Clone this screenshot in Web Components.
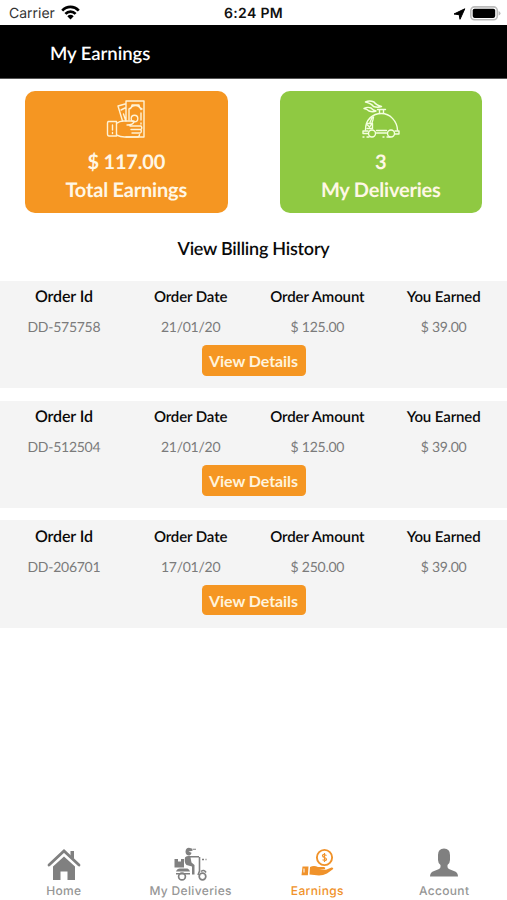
<!DOCTYPE html>
<html lang="en"><head><meta charset="utf-8"><title>My Earnings</title>
<style>
html,body{margin:0;height:100%;background:#fff}
body{font-family:Lato,"Open Sans",sans-serif;color:#0a0a0a;overflow:hidden;text-rendering:geometricPrecision}
</style></head><body>
<earnings-app></earnings-app>
<script>
const make=(name,html)=>customElements.define(name,class extends HTMLElement{
  constructor(){super();this.attachShadow({mode:'open'}).innerHTML=typeof html==='function'?html(this):html;}
});

make('status-bar',`<style>
:host{display:grid;grid-template-columns:1fr auto 1fr;align-items:center;height:25px;padding:2px 6px 0 9px;box-sizing:border-box;font:14px Inter,"Liberation Sans",sans-serif;color:#111}
.l,.r{display:flex;align-items:center}.l{color:#333}.r{justify-content:flex-end;gap:4px}b{font-weight:600;letter-spacing:.35px;margin-left:-3px}
.l svg{margin:-2px 0 0 6px}svg{display:block}
</style>
<div class="l"><span>Carrier</span><svg width="19" height="15" viewBox="0 0 19 15"><g fill="none" stroke="#000" stroke-width="2.700"><path d="M1.200 5.600C6 .7 13 .7 17.800 5.600M4.400 8.900c2.900-3 7.300-3 10.200 0"/></g><path d="M6.300 11.200q3.200-2.700 6.400 0L9.500 14.500z"/></svg></div>
<b>6:24 PM</b>
<div class="r"><svg width="13" height="12" viewBox="0 0 13 12"><path d="M11.800.8 7 11.300 6.200 6.700 1 6z" stroke="#000" stroke-width="1" stroke-linejoin="round"/></svg><svg width="31" height="15" viewBox="0 0 31 15"><rect x=".8" y=".9" width="26.500" height="12.800" rx="3.700" fill="#fff" stroke="#bbb" stroke-width="1.600"/><rect x="2.700" y="2.700" width="22.500" height="9.200" rx="1.800"/><path d="M28.600 5v4.600q1.900-.7 1.900-2.300T28.600 5" fill="#bbb"/></svg></div>`);

make('title-bar',`<style>:host{display:flex;align-items:center;box-sizing:border-box;height:54px;padding:2px 50px 0;background:#000;color:#fff;border-bottom:1px solid #555;font-size:18.500px;font-weight:600;letter-spacing:-.05px}</style><slot></slot>`);

make('stat-card',`<style>
:host{display:flex;flex-direction:column;align-items:center;width:203px;height:122px;box-sizing:border-box;padding-top:9px;border-radius:10px;background:var(--card);color:#fff7e5;font-size:20px;letter-spacing:-.2px;font-weight:700;line-height:27.500px}
.i{height:38px;width:40px;margin-bottom:11px}</style><div class="i"><slot name="icon"></slot></div><slot name="value"></slot><slot></slot>`);

make('cash-icon',`<style>:host,svg{display:block}</style><svg width="40" height="38" viewBox="0 0 40 38" fill="none" stroke="#fff2d4" stroke-width="1.400" stroke-linejoin="round" stroke-linecap="round">
<path d="M20 21V1h18v36H20M16.500 21 12 6l7-2M15 10l4-2M17.500 14l2 6"/>
<path d="M23 20V9q3-1 3-4h7q0 3 3 4M24.500 8.500q1-3 5-3t5.500 4"/><circle cx="28.500" cy="18.500" r="3.300"/><path d="M35 13v7M35 23v1"/>
<path d="M2 21.500h8.500V36H3q-1.500 0-1.500-2V23zM10.500 23.500q3-2.500 7-2.500H28q0 4-7 4M10.500 35q4 2 8 2h13q2 0 2-2.400M24 26h11q2 3-1 3.500H25M26 29.500h9q1 3-1 3.500h-8"/><path d="M6.500 25v5m0 2.500v1"/></svg>`);

make('cloche-icon',`<style>:host,svg{display:block}</style><svg width="40" height="38" viewBox="0 0 40 38" fill="none" stroke="#f4ffdf" stroke-width="1.400" stroke-linejoin="round" stroke-linecap="round">
<path d="M4.500 30C4.500 19 12 13.500 20.500 13.500S36 21 36.500 30M16.500 9.500h8M18.500 10v3M22.500 10v3"/>
<path d="M4.500 2q4-2 8.500 0 2 3 7.500 4.500-4 1.500-8 0-2-3-8-4.500M3 8.500q3.500-2 7-.5 2 2.500 5 3-3 1.500-7 0-2-2-5-2.500"/>
<path d="M12.500 17q-1 7-4 10l-2-2M11 17.500l-2 5M6.500 23.500h5v5H6"/>
<path d="M15.500 30.500h10M15.500 33h10M7 31H2v2.500h5M34 31h4v3h-4"/><circle cx="11" cy="33.500" r="3.500"/><circle cx="30" cy="33.500" r="3.500"/><path d="M2 37h1m3 0h2m14 0h1m3 0h3"/></svg>`);

make('action-button',`<style>:host{display:block}button{display:block;width:104px;height:30.500px;margin:0;padding:0;border:0;border-radius:4.500px;background:#f59622;color:#fff3dc;font:700 16px Lato,sans-serif;line-height:31px;letter-spacing:-.05px}</style><button><slot></slot></button>`);

make('order-field',el=>`<style>
:host{display:flex;flex-direction:column;align-items:center;gap:6px;padding-left:var(--nudge,0)}
b{font-weight:600;line-height:26px;font-size:var(--label-size,15px);letter-spacing:-.12px;white-space:nowrap}span{color:#7b7b7b;font-size:14px;letter-spacing:-.25px;line-height:22px;font-weight:400;white-space:nowrap}</style><b>${el.getAttribute('label')}</b><span><slot></slot></span>`);

make('order-row',el=>`<style>
:host{display:flex;flex-direction:column;align-items:center;gap:7.200px;height:107.500px;box-sizing:border-box;padding-top:3.200px;background:#f4f4f4}
.g{display:grid;grid-template-columns:repeat(4,1fr);width:100%}.g>:first-child{--label-size:16px;--nudge:1px}.g>:nth-child(2),.g>:nth-child(3){--nudge:1px}</style>
<div class="g"><order-field label="Order Id">${el.getAttribute('order')}</order-field><order-field label="Order Date">${el.getAttribute('date')}</order-field><order-field label="Order Amount">${el.getAttribute('amount')}</order-field><order-field label="You Earned">${el.getAttribute('earned')}</order-field></div><action-button>View Details</action-button>`);

const glyphs={
home:`<path d="M2 17 17 3 32 17" fill="none" stroke="currentColor" stroke-width="2.800" stroke-linecap="round"/><path d="M23.500 3H27v8l-3.500-3zM6 18.500 17 8.500 28 18.500v13.500h-7.500v-8.500h-7v8.500H6z"/>`,
scooter:`<path d="M11.500 3.500Q12-.8 16 0l2.500.8v2l-4 .7 3 1.200q-.5 2.800-3 2.800-3-.7-3-4zM19 .8h3v1h-3zM.5 11H4v2.500h3V11h3v8.500H.5zM11 9.500q1-2 4-1.500h10v1.500h-8.500l1 5 3 2.500v9.500h-2.500v-8L12.500 17q-2.500-2-1.500-7.500"/><path d="M25.500 9v14l-1.500 4M28 11.500h2m1.500 0h1M27 23.500q3-2.500 5 1" fill="none" stroke="currentColor" stroke-width="1.600"/><path d="M2 23.500q1-3 4-3h7.500q2 1 2.500 3zM2 25h14v1.500H2z"/><circle cx="8" cy="28.500" r="3.400" fill="none" stroke="currentColor" stroke-width="1.700"/><circle cx="28.500" cy="28.500" r="3.300" fill="none" stroke="currentColor" stroke-width="1.700"/>`,
earn:`<g fill="none" stroke="currentColor"><circle cx="24.500" cy="9.500" r="7.600" stroke-width="1.900"/><path d="M26.500 7.500q-3.500-2-4 0 0 1.500 2 2t2 2q-.5 1.700-4 .2M24.500 5v9" stroke-width="1.200"/></g><path d="M2.500 18.500H8.500l-.6 8.800H1.500zM10 19q4-2 8 0h6q2 .3 1 2h-6l7 .7 5.500-2.200q2-.3 1.700 1.500L27 25.500q-4 2-8 2L9.500 26.500z"/><path d="M4 20.500v4" stroke="#fff"/>`,
user:`<path d="M11 7Q11 .5 17 .5T23 7v5q0 3-2.500 5v2q0 1.500 2 2.200l5 2q3.500 1.200 3.500 5.300H3q0-4.100 3.500-5.300l5-2q2-.7 2-2.200v-2q-2.500-2-2.500-5z"/>`};
make('tab-item',el=>`<style>
:host{display:flex;flex-direction:column;align-items:center;color:#808080;padding-left:1px}:host([active]){color:#f0922a}
svg{display:block;fill:currentColor}span{font:500 12px/16px Inter,"Liberation Sans",sans-serif;color:#969696;letter-spacing:.35px;white-space:nowrap}:host([active]) span{color:#f0922a}</style>
<svg width="34" height="36" viewBox="0 -1 34 36">${glyphs[el.getAttribute('icon')]}</svg><span><slot></slot></span>`);
make('tab-bar',`<style>:host{display:grid;grid-template-columns:repeat(4,1fr);height:53px}</style><slot></slot>`);

make('earnings-app',`<style>
:host{display:flex;flex-direction:column;height:900px;width:507px;background:#fff}
.cards{display:flex;gap:52px;padding:12.400px 25px 0}
h2{margin:0;height:67.500px;line-height:71px;text-align:center;font-size:18px;font-weight:600;letter-spacing:-.24px}
.rows{display:grid;gap:12.300px;flex:1;align-content:start}
</style><status-bar></status-bar><title-bar>My Earnings</title-bar>
<div class="cards"><stat-card style="--card:#f59622"><cash-icon slot="icon"></cash-icon><span slot="value">$ 117.00</span>Total Earnings</stat-card><stat-card style="--card:#8fc942"><cloche-icon slot="icon"></cloche-icon><span slot="value">3</span>My Deliveries</stat-card></div>
<h2>View Billing History</h2>
<div class="rows"><order-row order="DD-575758" date="21/01/20" amount="$ 125.00" earned="$ 39.00"></order-row><order-row order="DD-512504" date="21/01/20" amount="$ 125.00" earned="$ 39.00"></order-row><order-row order="DD-206701" date="17/01/20" amount="$ 250.00" earned="$ 39.00"></order-row></div>
<tab-bar><tab-item icon="home">Home</tab-item><tab-item icon="scooter">My Deliveries</tab-item><tab-item icon="earn" active>Earnings</tab-item><tab-item icon="user">Account</tab-item></tab-bar>`);
</script></body></html>
